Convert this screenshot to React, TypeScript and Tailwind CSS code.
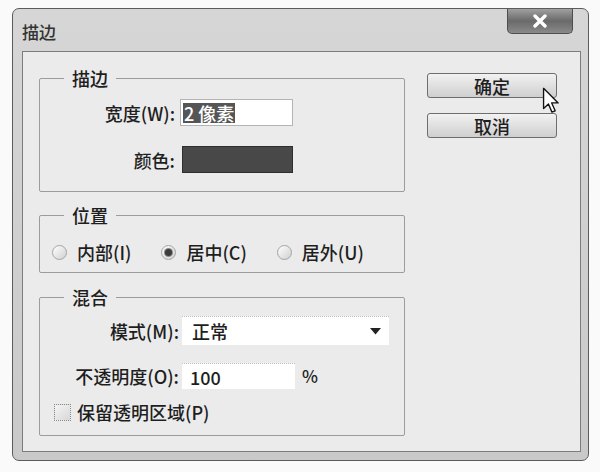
import React from 'react';

const font = { fontFamily: '"Noto Sans CJK SC", "Noto Sans", sans-serif' };

const Radio: React.FC<{ checked?: boolean; label: string }> = ({ checked, label }) => (
  <div className="flex items-center gap-[10px]">
    <span className="w-[15px] h-[15px] rounded-full border border-[#a4a4a4] bg-gradient-to-br from-[#ffffff] to-[#d0d0d0] flex items-center justify-center">
      {checked && <span className="w-[7px] h-[7px] rounded-full bg-[#3c3c3c] ring-1 ring-[#8a8a8a]" />}
    </span>
    <span className="text-[18px] leading-[24px]">{label}</span>
  </div>
);

const Group: React.FC<{ title: string; className?: string; children: React.ReactNode }> = ({ title, className, children }) => (
  <fieldset className={`w-[366px] border border-[#9c9c9c] rounded-[2px] ${className ?? ''}`}>
    <legend className="ml-[24px] px-[8px] text-[18px] leading-[24px]">{title}</legend>
    {children}
  </fieldset>
);

export default function App() {
  return (
    <div className="w-[600px] h-[472px] bg-[#fafafa] pt-[8px] pl-[12px] text-[#1e1e1e] font-medium" style={font}>
      <div className="w-[577px] h-[453px] rounded-[7px] border border-[#5c5c5c] bg-gradient-to-b from-[#d6d6d6] to-[#c9c9c9] flex flex-col pl-[9px] pr-[7px] pb-[8px]">
        {/* title bar */}
        <div className="h-[42px] flex items-start justify-between">
          <span className="mt-[12px] text-[17px] leading-[22px] text-[#333]">描边</span>
          <button className="mr-[8px] w-[66px] h-[25px] rounded-b-[5px] border border-t-0 border-[#4e4e4e] bg-gradient-to-b from-[#a0a0a0] via-[#6a6a6a] to-[#8a8a8a] flex items-center justify-center">
            <svg width="16" height="14" viewBox="0 0 16 14">
              <path d="M3 2 L13 12 M13 2 L3 12" stroke="#fff" strokeWidth="3.4" strokeLinecap="round" />
            </svg>
          </button>
        </div>

        {/* content */}
        <div className="flex-1 border border-[#7c7c7c] bg-[#ebebeb] flex pl-[16px] pt-[14px]">
          <div className="flex flex-col">
            <Group title="描边" className="h-[126px]">
              <div className="pt-[9px] flex flex-col gap-[20px]">
                <div className="flex items-center">
                  <span className="w-[135px] text-right text-[18px] leading-[24px]">宽度(W):</span>
                  <div className="ml-[5px] w-[113px] h-[27px] bg-white border border-[#b4b4b4] flex items-center pl-[2px]">
                    <span className="bg-[#555] text-white text-[18px] leading-[20px] px-[1px]">2 像素</span>
                  </div>
                </div>
                <div className="flex items-center">
                  <span className="w-[135px] text-right text-[18px] leading-[24px]">颜色:</span>
                  <div className="ml-[7px] w-[111px] h-[27px] bg-[#484848] border border-[#2e2e2e]" />
                </div>
              </div>
            </Group>

            <Group title="位置" className="mt-[11px] h-[70px]">
              <div className="pt-[13px] pl-[12px] flex items-center gap-[30px]">
                <Radio label="内部(I)" />
                <Radio checked label="居中(C)" />
                <Radio label="居外(U)" />
              </div>
            </Group>

            <Group title="混合" className="mt-[12px] h-[151px]">
              <div className="pt-[7px] flex flex-col">
                <div className="flex items-center">
                  <span className="w-[139px] text-right text-[18px] leading-[24px]">模式(M):</span>
                  <div className="ml-[3px] w-[207px] h-[29px] bg-white border-t border-dotted border-[#bcbcbc] flex items-center justify-between pl-[10px] pr-[8px]">
                    <span className="text-[18px] leading-[24px]">正常</span>
                    <svg width="11" height="7" viewBox="0 0 11 7">
                      <path d="M0 0 L11 0 L5.5 6.5 Z" fill="#222" />
                    </svg>
                  </div>
                </div>
                <div className="mt-[18px] flex items-center">
                  <span className="w-[139px] text-right text-[18px] leading-[24px]">不透明度(O):</span>
                  <div className="ml-[3px] w-[113px] h-[26px] bg-white border-t border-dotted border-[#bcbcbc] flex items-center pl-[8px]">
                    <span className="text-[18px] leading-[24px]">100</span>
                  </div>
                  <span className="ml-[7px] text-[17px] leading-[24px]">%</span>
                </div>
                <div className="mt-[11px] pl-[14px] flex items-center gap-[6px]">
                  <span className="w-[17px] h-[17px] border border-dotted border-[#8a8a8a] bg-gradient-to-br from-[#f4f4f4] to-[#d8d8d8]" />
                  <span className="text-[18px] leading-[24px]">保留透明区域(P)</span>
                </div>
              </div>
            </Group>
          </div>

          {/* buttons */}
          <div className="relative ml-[22px] mt-[7px] flex flex-col gap-[15px]">
            <button className="w-[130px] h-[25px] rounded-[3px] border border-[#6e6e6e] bg-gradient-to-b from-[#f2f2f2] to-[#cfcfcf] text-[18px] leading-[22px]">
              确定
            </button>
            <button className="w-[130px] h-[25px] rounded-[3px] border border-[#6e6e6e] bg-gradient-to-b from-[#f2f2f2] to-[#cfcfcf] text-[18px] leading-[22px]">
              取消
            </button>
            <svg className="absolute left-[115px] top-[14px]" width="18" height="27" viewBox="0 0 13 20">
              <path d="M1 1 L1 16 L4.6 12.6 L7.2 18.6 L9.6 17.6 L7 11.8 L11.8 11.8 Z" fill="#fff" stroke="#111" strokeWidth="1" strokeLinejoin="round" />
            </svg>
          </div>
        </div>
      </div>
    </div>
  );
}
